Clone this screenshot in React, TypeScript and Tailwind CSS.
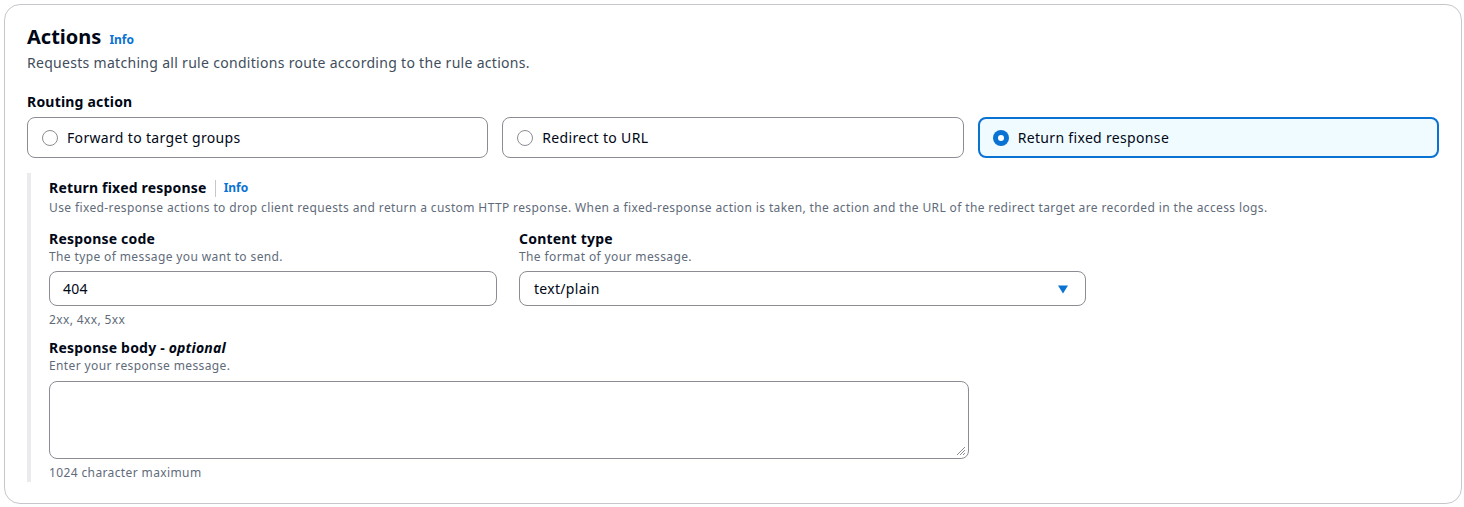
import React from 'react';

const font = { fontFamily: '"Noto Sans", "Open Sans", Arial, sans-serif' };

const RadioTile = ({ label, checked }: { label: string; checked?: boolean }) => (
  <div
    className={
      checked
        ? 'flex h-[41px] flex-1 items-center gap-[9px] rounded-lg border-2 border-[#0972d3] bg-[#f0fbff] px-[13px]'
        : 'flex h-[41px] flex-1 items-center gap-[9px] rounded-lg border border-[#8c8c94] bg-white px-[14px]'
    }
  >
    {checked ? (
      <span className="flex h-4 w-4 items-center justify-center rounded-full bg-[#0972d3]">
        <span className="h-[6px] w-[6px] rounded-full bg-white" />
      </span>
    ) : (
      <span className="h-4 w-4 rounded-full border border-[#8c8c94] bg-white" />
    )}
    <span className="text-[14px] tracking-[0.33px] text-[#000716]">{label}</span>
  </div>
);

const Label = ({ children }: { children: React.ReactNode }) => (
  <div className="text-[14px] font-bold leading-[20px] tracking-[0.2px] text-[#000716]">{children}</div>
);

const Hint = ({ children }: { children: React.ReactNode }) => (
  <div className="text-[12px] leading-[16px] tracking-[0.38px] text-[#5f6b7a]">{children}</div>
);

export default function App() {
  return (
    <div className="min-h-[507px] bg-white pt-1 pl-1 pr-[2px]" style={font}>
      <div className="rounded-2xl border border-[#c6c6cd] bg-white pl-[22px] pr-[22px] pt-[20px] pb-[21px]">
        <div className="flex items-baseline gap-2">
          <h2 className="text-[20px] font-bold leading-[24px] text-[#000716]">Actions</h2>
          <span className="text-[12px] font-bold text-[#0972d3]">Info</span>
        </div>
        <p className="mt-[4px] text-[14px] leading-[20px] tracking-[0.3px] text-[#414d5c]">
          Requests matching all rule conditions route according to the rule actions.
        </p>

        <div className="mt-[19px]">
          <Label>Routing action</Label>
          <div className="mt-[5px] flex gap-[14px]">
            <RadioTile label="Forward to target groups" />
            <RadioTile label="Redirect to URL" />
            <RadioTile label="Return fixed response" checked />
          </div>
        </div>

        <div className="mt-[15px] border-l-4 border-[#e9ebed] pl-[18px] pt-[5px] pb-[1px]">
          <div className="flex items-center">
            <span className="text-[14px] font-bold leading-[20px] tracking-[0.2px] text-[#000716]">Return fixed response</span>
            <span className="mx-[8px] h-[17px] w-px bg-[#c6c6cd]" />
            <span className="text-[12px] font-bold text-[#0972d3]">Info</span>
          </div>
          <div className="mt-[2px]">
            <Hint>
              Use fixed-response actions to drop client requests and return a custom HTTP response. When a
              fixed-response action is taken, the action and the URL of the redirect target are recorded in the
              access logs.
            </Hint>
          </div>

          <div className="mt-[13px] flex gap-[22px]">
            <div className="w-[448px]">
              <Label>Response code</Label>
              <Hint>The type of message you want to send.</Hint>
              <div className="mt-[6px] flex h-[35px] items-center rounded-lg border border-[#8c8c94] px-[13px] text-[14px] tracking-[0.3px] text-[#000716]">
                404
              </div>
              <div className="mt-[6px]">
                <Hint>2xx, 4xx, 5xx</Hint>
              </div>
            </div>
            <div className="w-[567px]">
              <Label>Content type</Label>
              <Hint>The format of your message.</Hint>
              <div className="mt-[6px] flex h-[35px] items-center justify-between rounded-lg border border-[#8c8c94] pl-[14px] pr-[16px] text-[14px] tracking-[0.3px] text-[#000716]">
                <span>text/plain</span>
                <svg width="12" height="12" viewBox="0 0 12 12">
                  <path d="M1 2.5h10L6 10.5z" fill="#0972d3" />
                </svg>
              </div>
            </div>
          </div>

          <div className="mt-[10px]">
            <Label>Response body - <i>optional</i></Label>
            <Hint>Enter your response message.</Hint>
            <div className="relative mt-[7px] h-[78px] w-[920px] rounded-lg border border-[#8c8c94]">
              <svg className="absolute bottom-[2px] right-[2px]" width="10" height="10" viewBox="0 0 10 10">
                <path d="M9 1L1 9M9 4L4 9M9 7L7 9" stroke="#8c8c94" strokeWidth="1" />
              </svg>
            </div>
            <div className="mt-[6px]">
              <Hint>1024 character maximum</Hint>
            </div>
          </div>
        </div>
      </div>
    </div>
  );
}
